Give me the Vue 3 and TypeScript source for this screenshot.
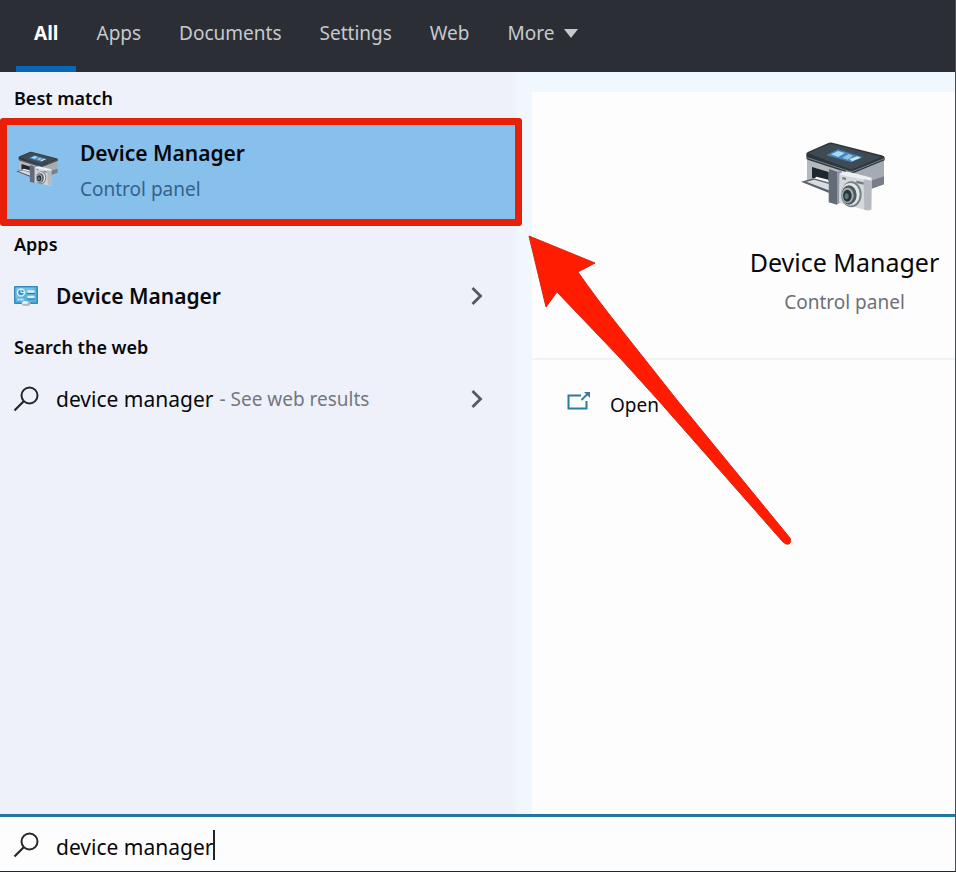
<script setup lang="ts">
import { ref } from 'vue'

const tabs: string[] = ['All', 'Apps', 'Documents', 'Settings', 'Web']
const activeTab = ref('All')
const query = ref('device manager')
</script>

<template>
  <div class="search-window">
    <svg class="symbols" aria-hidden="true">
      <symbol id="device" viewBox="54 46 264 220">
        <path d="M78 96 180 136 180 200 78 166Z" fill="#b5b9be" />
        <path d="M200 140 309 96 309 178 210 212Z" fill="#a6abb3" />
        <path d="M204 190 309 154 309 178 214 212Z" fill="#777e88" />
        <path d="M76 87Q76 83 82 80L142 54Q149 51 157 54L302 91Q311 94 311 98V106L220 143Q210 147 200 143L82 105Q76 103 76 98Z" fill="#2d363d" />
        <path d="M82 85 149 56 302 96 211 134Z" fill="#3f4b54" />
        <path d="M78 98 202 138Q210 141 219 138L310 101" fill="none" stroke="#78828a" stroke-width="3" />
        <path d="M136 91 170 73 245 96 211 112Z" fill="#4384ba" />
        <path d="M150 88 171 78 192 84 172 96Z" fill="#a9d8f1" />
        <path d="M184 98 203 87 216 92 200 104Z" fill="#8bc7e8" />
        <path d="M205 102 229 94 240 98 213 109Z" fill="#cce5ee" />
        <path d="M93 126 143 141 143 168 93 158Z" fill="#1d2730" />
        <path d="M106 155 142 164 142 175 98 163Z" fill="#fff" />
        <path d="M60 170 98 160 150 174 150 206Z" fill="#5c626b" />
        <path d="M76 170 100 164 147 178 147 197Z" fill="#d8dde2" />
        <path d="M144 132 168 140 168 239 143 232Z" fill="#626b77" />
        <path d="M168 140 183 136 183 228 168 239Z" fill="#9298a2" />
        <path d="M175 149Q174 144 180 143L263 159Q271 160 272 167L271 252Q270 259 261 257L179 235Q174 233 174 228Z" fill="#d4d7db" />
        <path d="M176 145 197 139 272 158 271 169 182 150Z" fill="#edf0f2" />
        <path d="M248 163 272 167 271 254 250 255Z" fill="#b6bac0" />
        <path d="M184 156 195 158 195 165 184 163ZM226 167 248 172 248 179 226 174Z" fill="#747c83" />
        <ellipse cx="211" cy="208" rx="31" ry="39" fill="#777e84" />
        <ellipse cx="208" cy="208" rx="28" ry="34" fill="#e3e6e8" />
        <ellipse cx="204" cy="210" rx="23" ry="29" fill="#50595f" />
        <ellipse cx="200" cy="211" rx="18" ry="23" fill="#a6afb4" />
        <ellipse cx="199" cy="212" rx="13" ry="18" fill="#26363c" />
        <path d="M194 204Q206 205 202 220Q193 227 190 215Z" fill="#60777c" />
      </symbol>
      <symbol id="magnifier" viewBox="0 0 26 26">
        <circle cx="16.5" cy="9.5" r="8" fill="none" stroke="currentColor" stroke-width="2" />
        <path d="M10.7 15.3 1.5 24.5" fill="none" stroke="currentColor" stroke-width="2.2" />
      </symbol>
      <symbol id="chevron" viewBox="0 0 14 20">
        <path d="M2.5 2 10.5 10 2.5 18" fill="none" stroke="currentColor" stroke-width="2.8" />
      </symbol>
    </svg>

    <nav class="tabs" aria-label="Search categories">
      <button
        v-for="tab in tabs"
        :key="tab"
        type="button"
        class="tab"
        :class="{ active: activeTab === tab }"
        @click="activeTab = tab"
      >{{ tab }}</button>
      <button type="button" class="tab">
        More
        <svg class="caret-down" viewBox="0 0 14 9" aria-hidden="true"><path d="M0 0H14L7 9Z" fill="currentColor" /></svg>
      </button>
    </nav>

    <main class="content">
      <section class="results">
        <h2 class="group-title first">Best match</h2>
        <button type="button" class="best-match">
          <svg class="best-icon" aria-hidden="true"><use href="#device" /></svg>
          <span class="best-text">
            <span class="result-name strong">Device Manager</span>
            <span class="kind">Control panel</span>
          </span>
        </button>

        <h2 class="group-title">Apps</h2>
        <button type="button" class="result">
          <svg class="result-icon" viewBox="0 0 26 26" aria-hidden="true">
            <rect x="1" y="3" width="24" height="18" rx="1" fill="#3389b9" />
            <rect x="2.5" y="4.5" width="21" height="15" fill="#58b2dc" />
            <path d="M2.5 4.5H23.5L2.5 16Z" fill="#8bd0ec" opacity=".55" />
            <circle cx="8" cy="9.5" r="3.5" fill="#3b92c0" stroke="#d7f2fb" stroke-width="1.5" />
            <path d="M8 9.5V6M8 9.5H11" stroke="#d7f2fb" />
            <path d="M14.5 8.5H21.5M14.5 14H21.5" stroke="#d7f2fb" stroke-width="2.5" />
            <path d="M14 10.5H22M14 16H22" stroke="#237eaa" />
            <path d="M4.5 16.5H11" stroke="#d7f2fb" stroke-width="2" stroke-dasharray="2 1" />
            <ellipse cx="13" cy="20.5" rx="4.5" ry="2.5" fill="#adb8bf" />
            <ellipse cx="12" cy="19.5" rx="3" ry="1.5" fill="#e9eef0" />
          </svg>
          <span class="result-name strong">Device Manager</span>
          <svg class="chevron" aria-hidden="true"><use href="#chevron" /></svg>
        </button>

        <h2 class="group-title">Search the web</h2>
        <button type="button" class="result">
          <svg class="result-icon" aria-hidden="true"><use href="#magnifier" /></svg>
          <span class="result-name">device manager</span>
          <span class="hint">- See web results</span>
          <svg class="chevron" aria-hidden="true"><use href="#chevron" /></svg>
        </button>
      </section>

      <section class="details">
        <div class="summary">
          <svg class="summary-icon" aria-hidden="true"><use href="#device" /></svg>
          <h1 class="summary-title">Device Manager</h1>
          <p class="kind summary-kind">Control panel</p>
        </div>
        <button type="button" class="open">
          <svg class="open-icon" viewBox="0 0 24 20" aria-hidden="true">
            <path d="M14 4.5H1.5V17.5H19.5V10" fill="none" stroke="#2c7c9c" stroke-width="2" />
            <path d="M14.5 9 21.5 2" fill="none" stroke="#3f78a0" stroke-width="2" />
            <path d="M17 1H23V7Z" fill="#3f78a0" />
          </svg>
          Open
        </button>
      </section>
    </main>

    <label class="search-bar">
      <svg class="result-icon" aria-hidden="true"><use href="#magnifier" /></svg>
      <input v-model="query" class="query" type="text" aria-label="Search" spellcheck="false" />
      <span class="text-cursor" />
    </label>

    <svg class="arrow" viewBox="0 0 264 312" aria-hidden="true">
      <path d="M1 2 67 29 50 38Q68 64 92 94L149 166 262 304Q264 308 261 310Q258 311 255 308L130 166 92 124 29 58 18 73Z" fill="#ff1c00" stroke="#cf2b16" stroke-width="1" />
    </svg>
  </div>
</template>

<style>
body {
  margin: 0;
}
</style>

<style scoped>
.search-window {
  position: relative;
  box-sizing: border-box;
  display: flex;
  flex-direction: column;
  min-height: 100vh;
  border-right: 1px solid #4b4f54;
  border-bottom: 1px solid #25282c;
  background: #fdfdfd;
  color: #08090c;
  font-family: "Noto Sans", "Open Sans", sans-serif;
  font-size: 19px;
  overflow: hidden;
}

.symbols {
  position: absolute;
  width: 0;
  height: 0;
}

button {
  margin: 0;
  padding: 0;
  border: 0;
  background: none;
  color: inherit;
  font: inherit;
  text-align: left;
  cursor: pointer;
}

.tabs {
  display: flex;
  gap: 2px;
  height: 72px;
  padding-left: 16px;
  background: #2b2e35;
}

.tab {
  display: flex;
  align-items: center;
  gap: 10px;
  box-sizing: border-box;
  padding: 0 18px;
  border-bottom: 6px solid transparent;
  color: #c6c9cd;
}

.tab.active {
  border-bottom-color: #0867b8;
  color: #ffffff;
  font-weight: 700;
}

.caret-down {
  width: 14px;
  height: 9px;
}

.content {
  flex: 1;
  display: grid;
  grid-template-columns: 532px 1fr;
}

.results {
  padding-right: 10px;
  background: linear-gradient(90deg, #eef1fa 512px, #f0f8fe 520px);
}

.group-title {
  margin: 0;
  padding: 4px 14px;
  font-size: 18px;
  font-weight: 600;
  line-height: 28px;
}

.group-title.first {
  padding: 12px 14px 6px;
}

.best-match {
  display: flex;
  align-items: center;
  gap: 21px;
  box-sizing: border-box;
  width: 100%;
  height: 108px;
  padding: 0 8px 2px;
  border: 7px solid #e81f09;
  border-radius: 3px;
  background: #88c0ec;
}

.best-icon {
  width: 44px;
  height: 40px;
  margin-bottom: 4px;
}

.best-text {
  display: flex;
  flex-direction: column;
  gap: 8px;
}

.result-name {
  font-size: 21px;
  line-height: 28px;
}

.strong {
  font-weight: 600;
}

.kind {
  color: #34628b;
  font-size: 19px;
  line-height: 28px;
}

.result {
  display: flex;
  align-items: center;
  width: 100%;
  height: 67px;
  padding: 0 38px 0 13px;
}

.result-icon {
  flex: none;
  width: 26px;
  height: 26px;
  margin-right: 17px;
  color: #24272b;
}

.hint {
  margin-left: 6px;
  color: #73777f;
  font-size: 19px;
}

.chevron {
  width: 14px;
  height: 20px;
  margin-left: auto;
  color: #55585f;
}

.details {
  border-top: 20px solid #f1f8fd;
}

.summary {
  display: flex;
  flex-direction: column;
  align-items: center;
  box-sizing: border-box;
  height: 268px;
  padding: 48px 0 0 202px;
  border-bottom: 2px solid #f0f2f4;
}

.summary-icon {
  width: 88px;
  height: 74px;
  margin-right: 4px;
}

.summary-title {
  margin: 0;
  padding-top: 30px;
  font-size: 25px;
  font-weight: 400;
  line-height: 36px;
  white-space: nowrap;
}

.summary-kind {
  margin: 0;
  padding-top: 8px;
  color: #6d7076;
}

.open {
  display: flex;
  align-items: center;
  gap: 19px;
  width: 100%;
  height: 90px;
  padding-left: 35px;
}

.open-icon {
  width: 24px;
  height: 20px;
  margin-bottom: 8px;
}

.search-bar {
  display: flex;
  align-items: center;
  height: 52px;
  padding: 2px 13px 0;
  border-top: 3px solid #2376a0;
  background: #fdfdfd;
}

.query {
  field-sizing: content;
  min-width: 2px;
  padding: 3px 0 0;
  border: 0;
  outline: 0;
  background: transparent;
  color: inherit;
  font-family: inherit;
  font-size: 21px;
}

.text-cursor {
  width: 2px;
  height: 30px;
  background: #202327;
}

.arrow {
  position: absolute;
  top: 234px;
  left: 528px;
  width: 264px;
  height: 312px;
  pointer-events: none;
}
</style>
